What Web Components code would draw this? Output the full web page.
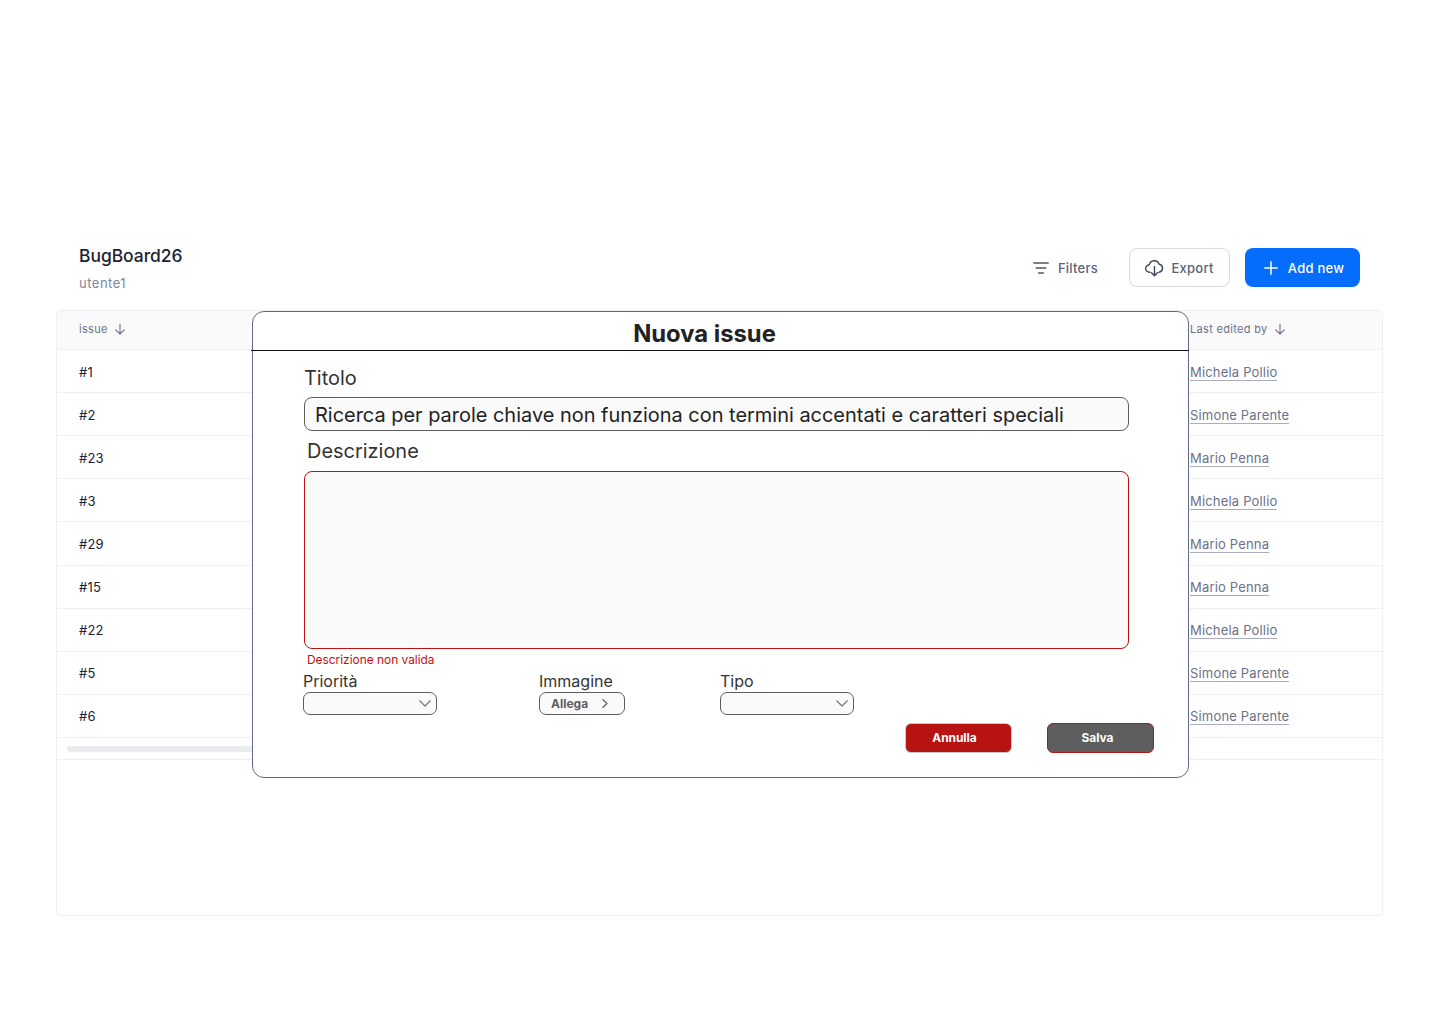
<!DOCTYPE html>
<html lang="it">
<head>
<meta charset="utf-8">
<title>BugBoard26</title>
<style>
  html, body { margin: 0; background: #fff; font-family: Inter, "Liberation Sans", sans-serif; }
</style>
</head>
<body>
<bug-page>
  <page-header slot="header" title="BugBoard26" user="utente1"></page-header>
  <issue-table slot="table"></issue-table>
  <issue-modal slot="modal"></issue-modal>
</bug-page>

<template id="arrow-tpl">
  <svg width="12" height="12" viewBox="0 0 12 12" fill="none" stroke="#6b7187" stroke-width="1.1" stroke-linecap="round" stroke-linejoin="round"><path d="M6 1v10M1.7 6.8 6 11l4.3-4.2"/></svg>
</template>

<script>
const arrowIcon = document.getElementById("arrow-tpl").innerHTML;

class BugPage extends HTMLElement {
  constructor() {
    super();
    this.attachShadow({ mode: "open" }).innerHTML = `
      <style>
        :host { display: block; position: relative; width: 1440px; height: 1024px; box-sizing: border-box; padding: 240px 56px 0 56px; }
        .modal { position: absolute; left: 252px; top: 311px; }
      </style>
      <slot name="header"></slot>
      <slot name="table"></slot>
      <div class="modal"><slot name="modal"></slot></div>`;
  }
}

class PageHeader extends HTMLElement {
  constructor() {
    super();
    this.attachShadow({ mode: "open" }).innerHTML = `
      <style>
        :host { display: flex; justify-content: space-between; height: 70px; padding: 0 24px 0 23px; box-sizing: border-box; }
        h1 { margin: 5px 0 0; font-size: 17.4px; line-height: 22px; font-weight: 500; color: #1a2233; }
        p { margin: 7px 0 0; font-size: 13px; line-height: 18px; color: #80869a; letter-spacing: .5px; }
        .actions { display: flex; align-items: flex-start; margin-top: 8px; }
        button { display: flex; align-items: center; height: 39px; box-sizing: border-box; border-radius: 8px; font: 500 13px Inter, sans-serif; letter-spacing: .25px; cursor: pointer; background: none; border: 1px solid transparent; color: #5a6276; padding: 0; }
        .filters { gap: 9px; margin-right: 30px; }
        .export { width: 101px; justify-content: center; gap: 7px; border-color: #d8dae3; margin-right: 15px; }
        .add { width: 115px; justify-content: center; gap: 10px; padding-left: 3px; background: #056dfb; color: #fff; }
      </style>
      <div>
        <h1>${this.getAttribute("title")}</h1>
        <p>${this.getAttribute("user")}</p>
      </div>
      <div class="actions">
        <button class="filters">
          <svg width="16" height="12" viewBox="0 0 16 12" fill="none" stroke="#4e5568" stroke-width="1.4" stroke-linecap="round"><path d="M.8 1h14.4M3.2 6h9.6M5.6 11h4.8"/></svg>
          Filters
        </button>
        <button class="export">
          <svg width="19" height="18" viewBox="0 0 19 18" fill="none" stroke="#3f4659" stroke-width="1.4" stroke-linecap="round" stroke-linejoin="round"><path d="M5 13.2H4.6A3.7 3.7 0 0 1 4.2 5.8 5.2 5.2 0 0 1 14.2 5.2 4.1 4.1 0 0 1 14.4 13.2H14"/><path d="M9.5 7.5v9M6.5 13.7l3 3 3-3"/></svg>
          Export
        </button>
        <button class="add">
          <svg width="14" height="14" viewBox="0 0 14 14" fill="none" stroke="#fff" stroke-width="1.5" stroke-linecap="round"><path d="M7 .8v12.4M.8 7h12.4"/></svg>
          Add new
        </button>
      </div>`;
  }
}

class TableRow extends HTMLElement {
  constructor() {
    super();
    this.attachShadow({ mode: "open" }).innerHTML = `
      <style>
        :host { display: grid; grid-template-columns: 1fr 192px; align-items: center; height: 43.12px; box-sizing: border-box; padding: 1px 0 0 22px; border-bottom: 1px solid #eff0f4; font-size: 13px; color: #1a2233; letter-spacing: .2px; }
        a { justify-self: start; position: relative; top: 1px; color: #6b7187; font-size: 13px; line-height: 15px; text-decoration: none; border-bottom: 1px solid #a9adbe; letter-spacing: .18px; }
      </style>
      <span>${this.getAttribute("issue")}</span>
      <a href="#">${this.getAttribute("editor")}</a>`;
  }
}

class IssueTable extends HTMLElement {
  constructor() {
    super();
    const rows = [
      ["#1", "Michela Pollio"], ["#2", "Simone Parente"], ["#23", "Mario Penna"],
      ["#3", "Michela Pollio"], ["#29", "Mario Penna"], ["#15", "Mario Penna"],
      ["#22", "Michela Pollio"], ["#5", "Simone Parente"], ["#6", "Simone Parente"]
    ];
    this.attachShadow({ mode: "open" }).innerHTML = `
      <style>
        :host { display: block; width: 1327px; height: 606px; box-sizing: border-box; border: 1px solid #eff0f4; border-radius: 4px; }
        .head { display: grid; grid-template-columns: 1fr 192px; align-items: center; height: 39px; box-sizing: border-box; padding: 0 0 2px 22px; background: #fafafb; border-bottom: 1px solid #eff0f4; font-size: 11px; color: #6b7187; letter-spacing: .32px; }
        .head span { display: flex; align-items: center; gap: 6px; }
        .bar { height: 22px; box-sizing: border-box; padding: 8px 10px 0; border-bottom: 1px solid #eff0f4; }
        .thumb { height: 6px; width: 400px; border-radius: 3px; background: #ebecf0; }
      </style>
      <div class="head"><span>issue ${arrowIcon}</span><span>Last edited by ${arrowIcon}</span></div>
      ${rows.map(r => `<table-row issue="${r[0]}" editor="${r[1]}"></table-row>`).join("")}
      <div class="bar"><div class="thumb"></div></div>`;
  }
}

class FieldSelect extends HTMLElement {
  constructor() {
    super();
    const chevron = this.hasAttribute("button")
      ? `<svg width="6" height="9" viewBox="0 0 6 9" fill="none" stroke="#5e5e5e" stroke-width="1.3" stroke-linecap="round" stroke-linejoin="round"><path d="M1 .8 5 4.5 1 8.2"/></svg>`
      : `<svg width="12" height="7" viewBox="0 0 12 7" fill="none" stroke="#76777c" stroke-width="1.2" stroke-linecap="round" stroke-linejoin="round"><path d="M.7.8 6 6 11.3.8"/></svg>`;
    this.attachShadow({ mode: "open" }).innerHTML = `
      <style>
        :host { display: block; font-size: 16px; color: #333; }
        label { display: block; line-height: 20px; margin-bottom: 1px; }
        .box { display: flex; align-items: center; justify-content: space-between; width: var(--w, 134px); height: 23px; box-sizing: border-box; padding: 0 var(--pr, 5px) 0 var(--pl, 12px); background: #fafafa; border: 1px solid #5e5e5e; border-radius: 7px; font-size: 12px; font-weight: 700; color: #5e5e5e; }
      </style>
      <label>${this.getAttribute("label")}</label>
      <div class="box"><span><slot></slot></span>${chevron}</div>`;
  }
}

class IssueModal extends HTMLElement {
  constructor() {
    super();
    this.attachShadow({ mode: "open" }).innerHTML = `
      <style>
        :host { display: block; width: 937px; height: 467px; box-sizing: border-box; background: #fff; border: 1px solid #5f6b85; border-radius: 12px; color: #333; }
        h2 { margin: 0 0 0 -2px; width: 938px; height: 39px; box-sizing: border-box; padding-right: 31px; border-bottom: 1px solid #111; text-align: center; font-size: 23.8px; line-height: 43px; font-weight: 700; color: #222; }
        .body { padding: 15px 59px 0 50px; }
        label { display: block; font-size: 19.95px; line-height: 24px; color: #333; }
        .titolo { margin: 0 0 0 1px; }
        .input { margin: 7px 0 8px 1px; width: 825px; height: 34px; box-sizing: border-box; padding-left: 10px; background: #fafafa; border: 1px solid #5e5e5e; border-radius: 8px; font-size: 19.95px; line-height: 34px; color: #222; }
        .descr { margin-left: 4px; }
        .area { margin: 8px 0 3px 1px; width: 825px; height: 178px; box-sizing: border-box; background: #fafafa; border: 1px solid #c21010; border-radius: 8px; }
        .error { margin-left: 4px; font-size: 11.9px; line-height: 16px; color: #c21010; }
        .fields { display: flex; margin-top: 3px; }
        .fields field-select:nth-child(1) { width: 236px; }
        .fields field-select:nth-child(2) { width: 181px; --w: 86px; --pr: 16px; --pl: 11px; }
        .actions { display: flex; margin: 8px 0 0 602px; gap: 35px; width: 300px; }
        button { flex: none; width: 107px; height: 30px; box-sizing: border-box; padding: 0 8px 2px 0; border-radius: 6px; font: 700 11.9px Inter, sans-serif; color: #fff; }
        .cancel { background: #b71313; border: 1px solid #c9c9c9; }
        .save { padding-right: 6px; background: #5e5e5e; border: 1px solid #b71313; }
      </style>
      <h2>Nuova issue</h2>
      <div class="body">
        <label class="titolo">Titolo</label>
        <div class="input">Ricerca per parole chiave non funziona con termini accentati e caratteri speciali</div>
        <label class="descr">Descrizione</label>
        <div class="area"></div>
        <div class="error">Descrizione non valida</div>
        <div class="fields">
          <field-select label="Priorità"></field-select>
          <field-select label="Immagine" button>Allega</field-select>
          <field-select label="Tipo"></field-select>
        </div>
        <div class="actions">
          <button class="cancel">Annulla</button>
          <button class="save">Salva</button>
        </div>
      </div>`;
  }
}

customElements.define("table-row", TableRow);
customElements.define("field-select", FieldSelect);
customElements.define("page-header", PageHeader);
customElements.define("issue-table", IssueTable);
customElements.define("issue-modal", IssueModal);
customElements.define("bug-page", BugPage);
</script>
</body>
</html>
